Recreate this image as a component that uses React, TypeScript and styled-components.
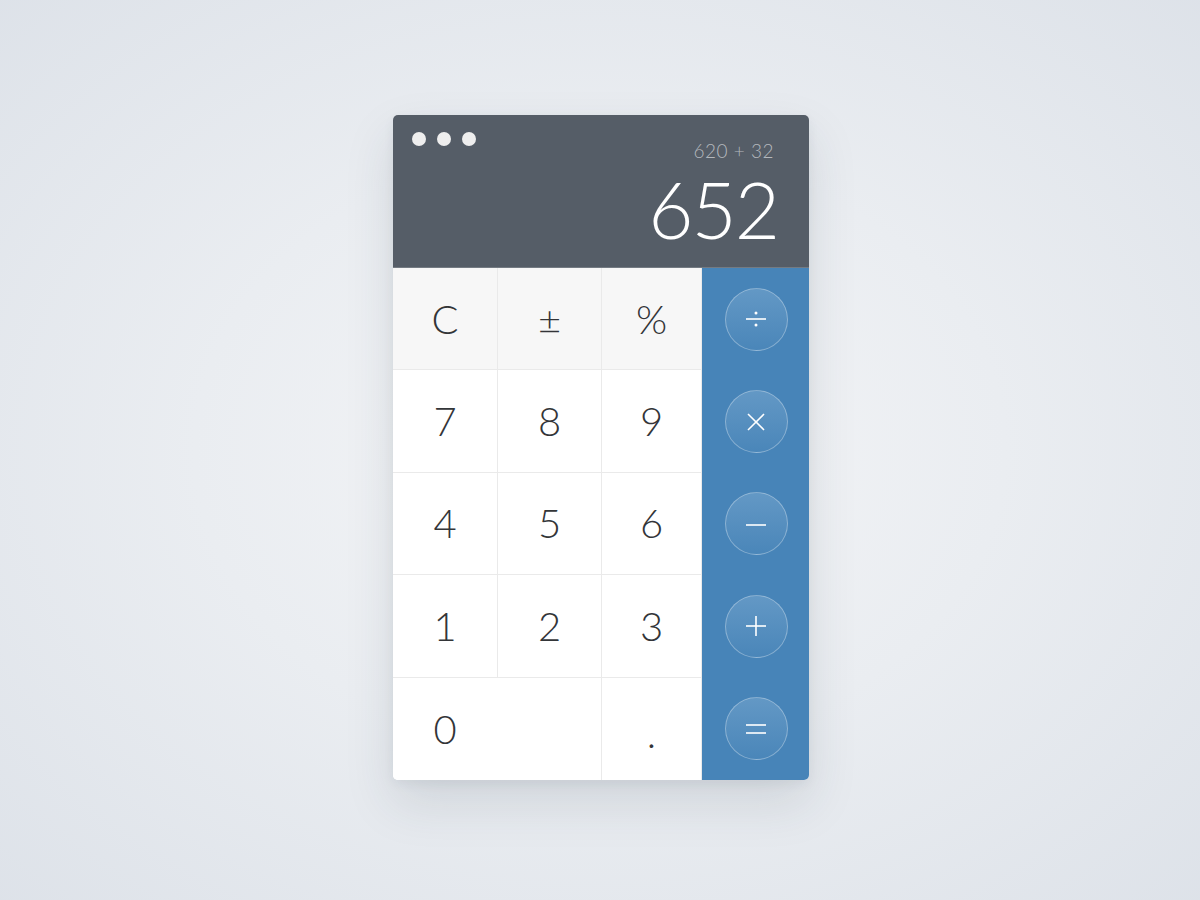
import styled, { createGlobalStyle } from "styled-components";

const GlobalStyle = createGlobalStyle`
  html, body {
    margin: 0;
    padding: 0;
    height: 100%;
  }
  body {
    font-family: Lato, "Open Sans", "Liberation Sans", sans-serif;
    background: radial-gradient(ellipse 75% 75% at 50% 50%, #f4f5f7 0%, #eaedf1 45%, #dce1e8 100%);
    min-height: 900px;
  }
`;

const Page = styled.div`
  display: flex;
  justify-content: center;
  padding: 115px 0 0 2px;
  height: 900px;
  box-sizing: border-box;
`;

const Card = styled.div`
  width: 416px;
  height: 665px;
  border-radius: 5px;
  overflow: hidden;
  display: flex;
  flex-direction: column;
  box-shadow: 0 22px 50px rgba(40, 52, 72, 0.13), 0 4px 12px rgba(40, 52, 72, 0.06);
`;

const Display = styled.div`
  height: 153px;
  box-sizing: border-box;
  background: #555d67;
  border-bottom: 1px solid #747b83;
  padding: 17px 31px 0 19px;
  display: flex;
  flex-direction: column;
`;

const TopRow = styled.div`
  display: flex;
  justify-content: space-between;
  align-items: flex-start;
`;

const Dots = styled.div`
  display: flex;
  gap: 11px;
`;

const Dot = styled.span`
  width: 14px;
  height: 14px;
  border-radius: 50%;
  background: #eeeeee;
`;

const Expression = styled.div`
  margin-top: 8px;
  margin-right: 4px;
  font-size: 19px;
  line-height: 22px;
  font-weight: 300;
  letter-spacing: 0.5px;
  color: #b4b8bd;
`;

const Result = styled.div`
  margin-top: 7px;
  text-align: right;
  font-size: 78px;
  line-height: 80px;
  font-weight: 300;
  color: #ffffff;
  letter-spacing: -2px;
`;

const Keypad = styled.div`
  flex: 1;
  display: grid;
  grid-template-columns: 105px 104px 100px 107px;
  grid-template-rows: repeat(5, 1fr);
  background: #ffffff;
`;

const Key = styled.div<{ $muted?: boolean; $wide?: boolean; $last?: boolean }>`
  display: flex;
  align-items: center;
  justify-content: center;
  box-sizing: border-box;
  grid-column: ${(p) => (p.$wide ? "span 2" : "auto")};
  padding-right: ${(p) => (p.$wide ? "104px" : "0")};
  background: ${(p) => (p.$muted ? "#f7f7f7" : "#ffffff")};
  border-right: 1px solid #eaeaea;
  border-bottom: ${(p) => (p.$last ? "none" : "1px solid #eaeaea")};
  font-size: 40px;
  font-weight: 300;
  color: #333538;
`;

const Dec = styled.span`
  display: block;
  margin-top: 8px;
`;

const OpCell = styled.div`
  background: #4784b8;
  display: flex;
  align-items: center;
  justify-content: center;
  padding-left: 1px;
`;

const OpButton = styled.div`
  width: 63px;
  height: 63px;
  box-sizing: border-box;
  border-radius: 50%;
  border: 1px solid rgba(255, 255, 255, 0.32);
  background: linear-gradient(180deg, #6398c5 0%, #4a86b9 100%);
  display: flex;
  align-items: center;
  justify-content: center;
`;

const Glyph = styled.svg`
  width: 22px;
  height: 22px;
  stroke: #ffffff;
  stroke-width: 1.6;
  fill: none;
  stroke-linecap: butt;
`;

const icons: Record<string, JSX.Element> = {
  divide: (
    <>
      <line x1="1" y1="11" x2="21" y2="11" />
      <circle cx="11" cy="5" r="1.5" fill="#fff" stroke="none" />
      <circle cx="11" cy="17" r="1.5" fill="#fff" stroke="none" />
    </>
  ),
  times: (
    <>
      <line x1="3" y1="3" x2="19" y2="19" />
      <line x1="19" y1="3" x2="3" y2="19" />
    </>
  ),
  minus: <line x1="1" y1="12" x2="21" y2="12" />,
  plus: (
    <>
      <line x1="1" y1="11" x2="21" y2="11" />
      <line x1="11" y1="1" x2="11" y2="21" />
    </>
  ),
  equals: (
    <>
      <line x1="1" y1="7" x2="21" y2="7" />
      <line x1="1" y1="15" x2="21" y2="15" />
    </>
  ),
};

function Operator({ name }: { name: string }) {
  return (
    <OpCell>
      <OpButton>
        <Glyph viewBox="0 0 22 22">{icons[name]}</Glyph>
      </OpButton>
    </OpCell>
  );
}

export default function App() {
  return (
    <>
      <GlobalStyle />
      <Page>
        <Card>
          <Display>
            <TopRow>
              <Dots>
                <Dot />
                <Dot />
                <Dot />
              </Dots>
              <Expression>620 + 32</Expression>
            </TopRow>
            <Result>652</Result>
          </Display>
          <Keypad>
            <Key $muted>C</Key>
            <Key $muted>±</Key>
            <Key $muted>%</Key>
            <Operator name="divide" />

            <Key>7</Key>
            <Key>8</Key>
            <Key>9</Key>
            <Operator name="times" />

            <Key>4</Key>
            <Key>5</Key>
            <Key>6</Key>
            <Operator name="minus" />

            <Key>1</Key>
            <Key>2</Key>
            <Key>3</Key>
            <Operator name="plus" />

            <Key $wide $last>0</Key>
            <Key $last>
              <Dec>.</Dec>
            </Key>
            <Operator name="equals" />
          </Keypad>
        </Card>
      </Page>
    </>
  );
}
